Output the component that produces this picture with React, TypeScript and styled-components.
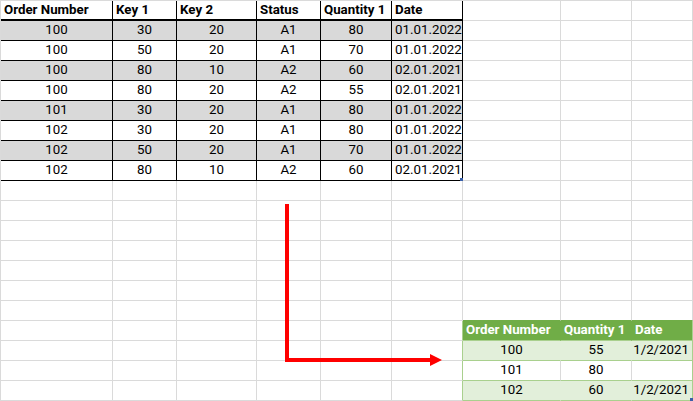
import React from "react";
import styled, { createGlobalStyle } from "styled-components";

const GlobalStyle = createGlobalStyle`
  html, body { margin: 0; padding: 0; background: #ffffff; }
  body { font-family: "Roboto", "Liberation Sans", sans-serif; }
`;

const COLS = [112, 64, 80, 64, 71, 71, 98, 71, 61];
const ROWS = 20;
const GRID = "#dadada";
const BLACK = "#000000";
const GREEN_DARK = "#70ad47";
const GREEN_LIGHT = "#e2efda";
const GREEN_LINE = "#a9d08e";

type Align = "left" | "center" | "right";

const Wrap = styled.div`
  position: relative;
  width: 693px;
  height: 401px;
  overflow: hidden;
`;

const Sheet = styled.div`
  display: grid;
  grid-template-columns: ${COLS.map((c) => `${c}px`).join(" ")};
  grid-auto-rows: 20px;
  border-top: 1px solid ${GRID};
  border-left: 1px solid ${GRID};
`;

const Cell = styled.div<{
  $bg: string;
  $br: string;
  $bb: string;
  $bbw: number;
  $align: Align;
  $bold: boolean;
  $color: string;
}>`
  position: relative;
  box-sizing: border-box;
  height: 20px;
  display: flex;
  align-items: flex-end;
  justify-content: ${(p) =>
    p.$align === "left" ? "flex-start" : p.$align === "right" ? "flex-end" : "center"};
  padding: 0 3px ${(p) => (p.$bbw > 1 ? 1 : 2)}px 3px;
  background: ${(p) => p.$bg};
  border-right: 1px solid ${(p) => p.$br};
  border-bottom: ${(p) => p.$bbw}px solid ${(p) => p.$bb};
  font-size: 13.3px;
  line-height: 16px;
  font-weight: ${(p) => (p.$bold ? 700 : 400)};
  color: ${(p) => p.$color};
  white-space: nowrap;
  overflow: visible;
`;

const Handle = styled.span`
  position: absolute;
  right: -1px;
  bottom: -1px;
  width: 3px;
  height: 3px;
  background: #3a5fa8;
`;

const Arrow = styled.svg`
  position: absolute;
  left: 0;
  top: 0;
  pointer-events: none;
`;

const HEAD = ["Order Number", "Key 1", "Key 2", "Status", "Quantity 1", "Date"];
const DATA: (string | number)[][] = [
  [100, 30, 20, "A1", 80, "01.01.2022"],
  [100, 50, 20, "A1", 70, "01.01.2022"],
  [100, 80, 10, "A2", 60, "02.01.2021"],
  [100, 80, 20, "A2", 55, "02.01.2021"],
  [101, 30, 20, "A1", 80, "01.01.2022"],
  [102, 30, 20, "A1", 80, "01.01.2022"],
  [102, 50, 20, "A1", 70, "01.01.2022"],
  [102, 80, 10, "A2", 60, "02.01.2021"],
];

const RES_HEAD = ["Order Number", "Quantity 1", "Date"];
const RES: string[][] = [
  ["100", "55", "1/2/2021"],
  ["101", "80", ""],
  ["102", "60", "1/2/2021"],
];

type Spec = {
  text: string;
  bg: string;
  br: string;
  bb: string;
  bbw: number;
  align: Align;
  bold: boolean;
  color: string;
  handle: boolean;
};

function spec(r: number, c: number): Spec {
  const s: Spec = {
    text: "",
    bg: "#ffffff",
    br: GRID,
    bb: GRID,
    bbw: 1,
    align: "left",
    bold: false,
    color: "#000000",
    handle: false,
  };
  // top source table
  if (r <= 8 && c <= 5) {
    s.br = BLACK;
    s.bb = BLACK;
    if (r === 0) {
      s.text = HEAD[c];
      s.bold = true;
      s.bbw = 2;
    } else {
      s.text = String(DATA[r - 1][c]);
      s.bg = r % 2 === 1 ? "#d9d9d9" : "#ffffff";
      s.align = c === 5 ? "left" : "center";
      if (r === 8 && c === 5) s.handle = true;
    }
  }
  // result table
  if (r === 15 && c >= 6) s.bb = GREEN_DARK;
  if (r >= 16 && c === 5) s.br = GREEN_LINE;
  if (r >= 16 && c >= 6) {
    const k = c - 6;
    s.bb = GREEN_LINE;
    if (r === 16) {
      s.text = RES_HEAD[k];
      s.bg = GREEN_DARK;
      s.br = GREEN_DARK;
      s.bold = true;
      s.color = "#ffffff";
    } else {
      const row = RES[r - 17];
      s.text = row[k];
      const shaded = r % 2 === 1;
      s.bg = shaded ? GREEN_LIGHT : "#ffffff";
      s.br = shaded ? GREEN_LIGHT : GRID;
      s.align = k === 2 ? "right" : "center";
      if (r === 19 && k === 2) s.handle = true;
    }
    if (c === 8) s.br = GREEN_LINE;
  }
  return s;
}

export default function App() {
  const cells: React.ReactNode[] = [];
  for (let r = 0; r < ROWS; r++) {
    for (let c = 0; c < COLS.length; c++) {
      const s = spec(r, c);
      cells.push(
        <Cell
          key={`${r}-${c}`}
          $bg={s.bg}
          $br={s.br}
          $bb={s.bb}
          $bbw={s.bbw}
          $align={s.align}
          $bold={s.bold}
          $color={s.color}
        >
          {s.text}
          {s.handle && <Handle />}
        </Cell>
      );
    }
  }
  return (
    <>
      <GlobalStyle />
      <Wrap>
        <Sheet>{cells}</Sheet>
        <Arrow width="693" height="401" viewBox="0 0 693 401">
          <path
            d="M287 204 L287 360 L431 360"
            fill="none"
            stroke="#ff0000"
            strokeWidth="4"
            strokeLinejoin="miter"
          />
          <polygon points="430,354 442,360 430,366" fill="#ff0000" />
        </Arrow>
      </Wrap>
    </>
  );
}
